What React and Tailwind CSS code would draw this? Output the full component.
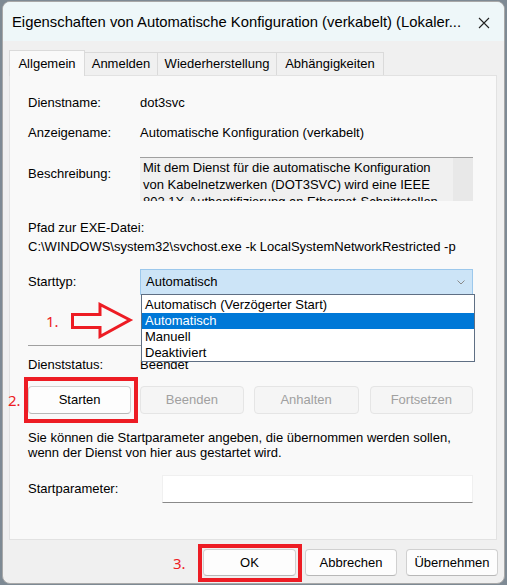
import React from "react";

const F = { fontFamily: '"Liberation Sans", Arial, sans-serif' };

function Btn({ children, disabled, className = "" }) {
  return (
    <div
      className={
        "flex items-center justify-center rounded-[4px] border text-[13px] " +
        (disabled
          ? "bg-[#f5f5f5] border-[#e5e5e5] text-[#a0a0a0] "
          : "bg-[#fdfdfd] border-[#d0d0d0] border-b-[#b8b8b8] text-black ") +
        className
      }
    >
      {children}
    </div>
  );
}

export default function App() {
  return (
    <div className="w-[507px] h-[585px] bg-[#7e8a94] overflow-hidden" style={F}>
      <div className="relative ml-[2px] mt-[1px] w-[503px] h-[583px] rounded-[8px] border border-[#a8a8a8] bg-[#f0f0f0] overflow-hidden">
        {/* Title bar */}
        <div className="h-[39px] bg-[#eef7f9] flex items-center pl-[9px] pr-[13px]">
          <div className="flex-1 text-[14.8px] text-black whitespace-nowrap leading-none pt-[2px]">
            Eigenschaften von Automatische Konfiguration (verkabelt) (Lokaler...
          </div>
          <svg width="12" height="12" viewBox="0 0 12 12" className="mr-[1px] mt-[2px]">
            <path d="M1 1 L11 11 M11 1 L1 11" stroke="#222" strokeWidth="1.1" fill="none" />
          </svg>
        </div>

        {/* Tabs */}
        <div className="pl-[6px] pt-[8px] flex items-end h-[34px]">
          <div className="h-[26px] w-[76px] bg-[#f9f9f9] border border-b-0 border-[#dadada] flex items-start justify-center pt-[3px] text-[13px] -mb-[1px] relative z-10">
            Allgemein
          </div>
          <div className="h-[23px] w-[73px] border border-l-0 border-b-0 border-[#dadada] flex items-center justify-center text-[13px] bg-[#f0f0f0]">
            Anmelden
          </div>
          <div className="h-[23px] w-[119px] border border-l-0 border-b-0 border-[#dadada] flex items-center justify-center text-[13px] bg-[#f0f0f0]">
            Wiederherstellung
          </div>
          <div className="h-[23px] w-[107px] border border-l-0 border-b-0 border-[#dadada] flex items-center justify-center text-[13px] bg-[#f0f0f0]">
            Abhängigkeiten
          </div>
        </div>

        {/* Panel */}
        <div className="ml-[6px] w-[488px] h-[465px] bg-[#f9f9f9] border border-[#e2e2e2] pl-[18px] pr-[23px] text-[13px] text-black flex flex-col">
          <div className="mt-[17px] h-[20px] flex items-center">
            <div className="w-[112px]">Dienstname:</div>
            <div>dot3svc</div>
          </div>
          <div className="mt-[10px] h-[20px] flex items-center">
            <div className="w-[112px]">Anzeigename:</div>
            <div>Automatische Konfiguration (verkabelt)</div>
          </div>
          <div className="mt-[14px] h-[44px] flex">
            <div className="w-[112px] pt-[7px] leading-[20px]">Beschreibung:</div>
            <div className="flex-1 flex bg-[#f0f0f0] border-t border-[#a0a0a0] overflow-hidden">
              <div className="flex-1 pl-[3px] pt-[1px] leading-[17px]">
                Mit dem Dienst für die automatische Konfiguration von Kabelnetzwerken (DOT3SVC) wird eine IEEE 802.1X-Authentifizierung an Ethernet-Schnittstellen durchgeführt.
              </div>
              <div className="w-[20px] bg-[#e8e8e8]" />
            </div>
          </div>
          <div className="mt-[17px] h-[19px] flex items-center">Pfad zur EXE-Datei:</div>
          <div className="h-[20px] flex items-center whitespace-nowrap">
            C:\WINDOWS\system32\svchost.exe -k LocalSystemNetworkRestricted -p
          </div>
          <div className="mt-[12px] h-[26px] flex items-center">
            <div className="w-[112px]">Starttyp:</div>
            <div className="flex-1 h-full bg-[#cce4f7] border border-[#9cc8ec] flex items-center pl-[5px] pr-[7px]">
              <div className="flex-1">Automatisch</div>
              <svg width="8" height="5" viewBox="0 0 8 5">
                <path d="M0.5 0.5 L4 4 L7.5 0.5" stroke="#8a8a8a" strokeWidth="1" fill="none" />
              </svg>
            </div>
          </div>
          <div className="mt-[50px] h-[1px] bg-[#a0a0a0]" />
          <div className="mt-[9px] h-[20px] flex items-center">
            <div className="w-[112px]">Dienststatus:</div>
            <div>Beendet</div>
          </div>
          <div className="mt-[11px] h-[28px] flex gap-[9px]">
            <Btn className="w-[104px]">Starten</Btn>
            <Btn disabled className="w-[104px]">Beenden</Btn>
            <Btn disabled className="w-[106px] ml-[1px]">Anhalten</Btn>
            <Btn disabled className="w-[104px] ml-[2px]">Fortsetzen</Btn>
          </div>
          <div className="mt-[16px] leading-[15px]">
            Sie können die Startparameter angeben, die übernommen werden sollen,
            <br />
            wenn der Dienst von hier aus gestartet wird.
          </div>
          <div className="mt-[15px] h-[28px] flex items-center">
            <div className="w-[134px]">Startparameter:</div>
            <div className="flex-1 h-full bg-white border border-[#f0f0f0] border-b-[#8a8a8a]" />
          </div>
        </div>

        {/* Bottom buttons */}
        <div className="mt-[9px] flex pl-[200px] gap-[9px]">
          <Btn className="w-[93px] h-[27px] border-[#c8d4e0] border-b-[#7aa6d0]">OK</Btn>
          <Btn className="w-[92px] h-[27px]">Abbrechen</Btn>
          <Btn className="w-[92px] h-[27px]">Übernehmen</Btn>
        </div>

        {/* Dropdown list (overlay) */}
        <div className="absolute left-[138px] top-[292px] w-[334px] h-[68px] bg-white border border-[#5f6f84] text-[13px] leading-[16px] py-[1px]">
          <div className="pl-[3px] h-[17px] flex items-center">Automatisch (Verzögerter Start)</div>
          <div className="pl-[3px] h-[16px] flex items-center bg-[#0078d7] text-white">Automatisch</div>
          <div className="pl-[3px] h-[16px] flex items-center">Manuell</div>
          <div className="pl-[3px] h-[16px] flex items-center">Deaktiviert</div>
        </div>

        {/* Annotations */}
        <svg className="absolute left-[66px] top-[299px]" width="66" height="40" viewBox="0 0 66 40">
          <path d="M3.5 13.5 L31 13.5 L31 3.5 L61 19 L31 35.5 L31 26.5 L3.5 26.5 Z" stroke="#ed1c24" strokeWidth="3" fill="none" strokeLinejoin="miter" />
        </svg>
        <div className="absolute left-[43px] top-[308px] text-[15px] text-[#ed1c24]" style={{ fontFamily: '"Noto Sans", sans-serif' }}>1.</div>
        <div className="absolute left-[5px] top-[387px] text-[15px] text-[#ed1c24]" style={{ fontFamily: '"Noto Sans", sans-serif' }}>2.</div>
        <div className="absolute left-[170px] top-[550px] text-[15px] text-[#ed1c24]" style={{ fontFamily: '"Noto Sans", sans-serif' }}>3.</div>
        <div className="absolute left-[21px] top-[375px] w-[114px] h-[46px] border-[4px] border-[#ed1c24]" />
        <div className="absolute left-[195px] top-[542px] w-[104px] h-[38px] border-[4px] border-[#ed1c24]" />
      </div>
    </div>
  );
}
